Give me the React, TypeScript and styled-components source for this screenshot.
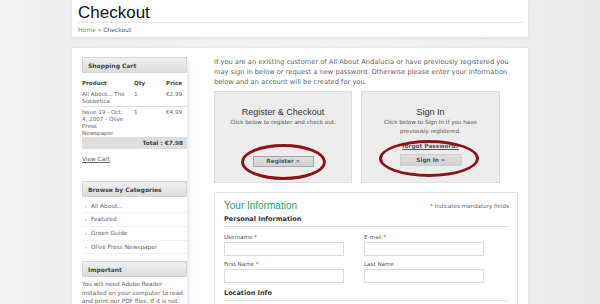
import React from "react";
import styled, { createGlobalStyle } from "styled-components";

const Global = createGlobalStyle`
  html, body { margin: 0; padding: 0; }
  body {
    background: linear-gradient(90deg, #f3f3f3 0%, #ececec 12%, #f0f0f0 50%, #ececec 88%, #e9e9e9 100%);
    font-family: "DejaVu Sans", Verdana, sans-serif;
    color: #555;
    height: 304px;
    overflow: hidden;
  }
`;

const Page = styled.div`
  width: 456px;
  margin: 0 auto;
`;

const Header = styled.header`
  background: #fff;
  height: 37px;
  padding: 0 5px 0 6px;
  box-sizing: border-box;
  box-shadow: 0 1px 2px rgba(0, 0, 0, 0.08);
`;

const Title = styled.h1`
  margin: 0;
  font-family: "Liberation Sans", Arial, sans-serif;
  font-weight: normal;
  font-size: 17px;
  line-height: 22px;
  height: 23px;
  color: #111;
  border-bottom: 1px solid #e6e6e6;
  box-sizing: border-box;
  padding-top: 2px;
`;

const Crumbs = styled.div`
  font-size: 6px;
  line-height: 13px;
  color: #555;
  a { color: #3aa38a; text-decoration: none; }
`;

const Main = styled.div`
  margin-top: 11px;
  background: #fff;
  min-height: 300px;
  padding: 9px 10px 0 10px;
  display: flex;
  gap: 27px;
  box-shadow: 0 0 1px rgba(0, 0, 0, 0.12);
`;

const Sidebar = styled.aside`
  width: 105px;
  flex: none;
  box-shadow: 6px 0 5px -4px rgba(0, 0, 0, 0.1);
  min-height: 260px;
`;

const SideHead = styled.div`
  height: 16px;
  line-height: 16px;
  padding-left: 5px;
  font-size: 6px;
  font-weight: bold;
  color: #444;
  background: linear-gradient(#f0f0f0, #dcdcdc);
  border: 1px solid #d6d6d6;
  box-sizing: border-box;
`;

const Cart = styled.div`
  font-size: 5.6px;
  line-height: 6.8px;
  color: #666;
  margin-top: 5px;
`;

const CartRow = styled.div<{ $head?: boolean; $line?: boolean; $last?: boolean }>`
  display: grid;
  grid-template-columns: 52px 1fr auto;
  padding: 2px 5px ${(p) => (p.$last ? 0 : 2)}px 0;
  font-weight: ${(p) => (p.$head ? "bold" : "normal")};
  color: ${(p) => (p.$head ? "#444" : "#666")};
  border-bottom: ${(p) => (p.$line ? "1px solid #e2e2e2" : "none")};
  & > span:first-child { padding-right: 7px; }
`;

const Total = styled.div`
  background: #dedede;
  height: 12px;
  line-height: 12px;
  text-align: right;
  padding-right: 4px;
  font-weight: bold;
  font-size: 5.8px;
  color: #444;
  margin-top: 0;
`;

const ViewCart = styled.a`
  display: block;
  margin: 7px 0 19px;
  font-size: 5.8px;
  color: #666;
  text-decoration: underline;
`;

const CatList = styled.ul`
  list-style: none;
  margin: 3px 0 7px;
  padding: 0;
`;

const CatItem = styled.li`
  font-size: 5.8px;
  height: 13.7px;
  line-height: 13px;
  color: #666;
  border-bottom: 1px solid #f0f0f0;
  box-sizing: border-box;
  padding-left: 3px;
  span { font-size: 5px; margin-right: 4px; color: #777; }
`;

const Note = styled.p`
  margin: 3px 0 0;
  font-size: 5.8px;
  line-height: 8.5px;
  color: #666;
`;

const Content = styled.div`
  flex: 1;
  min-width: 0;
`;

const Intro = styled.p`
  margin: 0;
  font-size: 6.7px;
  line-height: 10px;
  color: #666;
  width: 299px;
`;

const Choices = styled.div`
  display: flex;
  gap: 9px;
  margin-top: 4px;
`;

const Choice = styled.div<{ $w: number }>`
  position: relative;
  width: ${(p) => p.$w}px;
  height: 92px;
  box-sizing: border-box;
  background: #ececec;
  border: 1px solid #dedede;
  display: flex;
  flex-direction: column;
  align-items: center;
  text-align: center;
  padding-top: 14px;
`;

const ChoiceTitle = styled.div`
  font-family: "Liberation Sans", Arial, sans-serif;
  font-size: 9px;
  line-height: 12px;
  color: #333;
`;

const ChoiceText = styled.div`
  font-size: 5.6px;
  line-height: 9px;
  color: #555;
`;

const Forgot = styled.a`
  font-size: 5.8px;
  line-height: 9px;
  font-weight: bold;
  color: #555;
  text-decoration: underline;
  margin-top: 6px;
`;

const Btn = styled.div<{ $w: number; $mt: number; $h: number }>`
  width: ${(p) => p.$w}px;
  height: ${(p) => p.$h}px;
  margin-top: ${(p) => p.$mt}px;
  box-sizing: border-box;
  background: linear-gradient(#dedede, #d2d2d2);
  border: 1px solid ${(p) => (p.$w < 62 ? "#a8a8a8" : "#cfcfcf")};
  font-size: 5.8px;
  font-weight: bold;
  line-height: ${(p) => p.$h - 2}px;
  color: #555;
`;

const Ring = styled.div<{ $l: number; $t: number; $w: number; $h: number }>`
  position: absolute;
  left: ${(p) => p.$l}px;
  top: ${(p) => p.$t}px;
  width: ${(p) => p.$w}px;
  height: ${(p) => p.$h}px;
  border: 3px solid #8e1219;
  border-radius: 50%;
  box-sizing: border-box;
  pointer-events: none;
`;

const FormBox = styled.div`
  margin-top: 9px;
  border: 1px solid #e4e4e4;
  border-bottom: none;
  width: 304px;
  box-sizing: border-box;
  padding: 5px 8px 0 9px;
  height: 120px;
`;

const FormTop = styled.div`
  display: flex;
  justify-content: space-between;
  align-items: center;
  height: 15px;
`;

const FormTitle = styled.h2`
  margin: 0;
  font-family: "Liberation Sans", Arial, sans-serif;
  font-weight: normal;
  font-size: 10px;
  color: #25a06c;
`;

const Mandatory = styled.div`
  font-size: 5.6px;
  color: #666;
  b { color: #c33; font-weight: normal; }
`;

const Section = styled.h3`
  margin: 0;
  font-size: 6.5px;
  font-weight: bold;
  color: #333;
  line-height: 12px;
  border-bottom: 1px solid #e4e4e4;
  padding-bottom: 1px;
`;

const Fields = styled.div`
  display: grid;
  grid-template-columns: 140px 120px;
  row-gap: 0;
  padding: 5px 0 1px;
`;

const Field = styled.div`
  display: flex;
  flex-direction: column;
`;

const Label = styled.label`
  font-size: 5.6px;
  line-height: 10px;
  color: #555;
  b { color: #c33; font-weight: normal; }
`;

const Input = styled.div`
  width: 120px;
  height: 14px;
  box-sizing: border-box;
  border: 1px solid #dcdcdc;
  background: #fff;
  margin-bottom: 3px;
`;

export default function App() {
  return (
    <>
      <Global />
      <Page>
        <Header>
          <Title>Checkout</Title>
          <Crumbs>
            <a>Home</a> » Checkout
          </Crumbs>
        </Header>
        <Main>
          <Sidebar>
            <SideHead>Shopping Cart</SideHead>
            <Cart>
              <CartRow $head>
                <span>Product</span>
                <span>Qty</span>
                <span>Price</span>
              </CartRow>
              <CartRow $line>
                <span>All About... The Subbetica</span>
                <span>1</span>
                <span>€2.99</span>
              </CartRow>
              <CartRow $last>
                <span>Issue 19 - Oct 4, 2007 - Olive Press Newspaper</span>
                <span>1</span>
                <span>€4.99</span>
              </CartRow>
            </Cart>
            <Total>Total : €7.98</Total>
            <ViewCart>View Cart</ViewCart>
            <SideHead>Browse by Categories</SideHead>
            <CatList>
              {["All About...", "Featured", "Green Guide", "Olive Press Newspaper"].map((c) => (
                <CatItem key={c}>
                  <span>›</span>
                  {c}
                </CatItem>
              ))}
            </CatList>
            <SideHead>Important</SideHead>
            <Note>
              You will need Adobe Reader installed on your computer to read and print our PDF files. If it is not
            </Note>
          </Sidebar>
          <Content>
            <Intro>
              If you are an existing customer of All About Andalucia or have previously registered you may sign in below or request a new password. Otherwise please enter your information below and an account will be created for you.
            </Intro>
            <Choices>
              <Choice $w={138}>
                <ChoiceTitle>Register &amp; Checkout</ChoiceTitle>
                <ChoiceText>Click below to register and check out.</ChoiceText>
                <Btn $w={61} $h={11} $mt={29}>Register »</Btn>
                <Ring $l={26} $t={52} $w={85} $h={36} />
              </Choice>
              <Choice $w={139}>
                <ChoiceTitle>Sign In</ChoiceTitle>
                <ChoiceText>
                  Click below to Sign In if you have
                  <br />
                  previously registered.
                </ChoiceText>
                <Forgot>forgot Password?</Forgot>
                <Btn $w={62} $h={12} $mt={3}>Sign In »</Btn>
                <Ring $l={17} $t={48} $w={100} $h={37} />
              </Choice>
            </Choices>
            <FormBox>
              <FormTop>
                <FormTitle>Your Information</FormTitle>
                <Mandatory>
                  <b>*</b> Indicates mandatory fields
                </Mandatory>
              </FormTop>
              <Section>Personal Information</Section>
              <Fields>
                <Field>
                  <Label>
                    Username <b>*</b>
                  </Label>
                  <Input />
                </Field>
                <Field>
                  <Label>
                    E-mail <b>*</b>
                  </Label>
                  <Input />
                </Field>
                <Field>
                  <Label>
                    First Name <b>*</b>
                  </Label>
                  <Input />
                </Field>
                <Field>
                  <Label>Last Name</Label>
                  <Input />
                </Field>
              </Fields>
              <Section>Location Info</Section>
            </FormBox>
          </Content>
        </Main>
      </Page>
    </>
  );
}
